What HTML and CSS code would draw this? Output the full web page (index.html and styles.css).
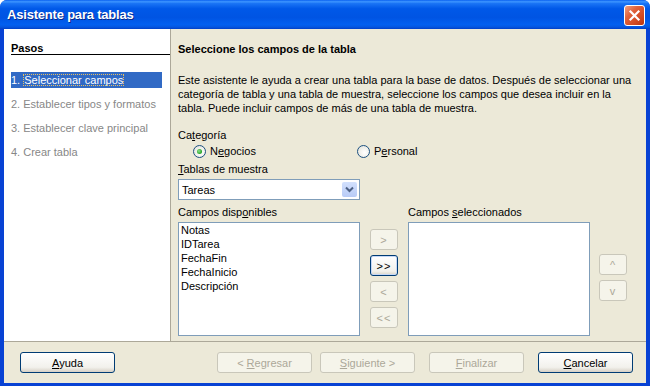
FILE: index.html
```html
<!DOCTYPE html>
<html lang="es">
<head>
    <meta charset="UTF-8">
    <title>Asistente para tablas</title>
    <link rel="stylesheet" href="styles.css">
</head>
<body>
    <div class="window">
        <div class="title-bar">
            <span class="title-text">Asistente para tablas</span>
            <button class="close-button">
                <svg width="13" height="13" viewBox="0 0 13 13">
                    <path d="M2.5 2.5 L10.5 10.5 M10.5 2.5 L2.5 10.5" stroke="#fff" stroke-width="2.2" stroke-linecap="square"/>
                </svg>
            </button>
        </div>

        <div class="client">
            <div class="wizard">
                <div class="steps">
                    <div class="steps-title">Pasos</div>
                    <ul class="step-list">
                        <li class="step active">1. <span class="focus">Seleccionar campos</span></li>
                        <li class="step">2. Establecer tipos y formatos</li>
                        <li class="step">3. Establecer clave principal</li>
                        <li class="step">4. Crear tabla</li>
                    </ul>
                </div>

                <div class="page">
                    <div class="page-title">Seleccione los campos de la tabla</div>
                    <p class="intro">Este asistente le ayuda a crear una tabla para la base de datos. Después de seleccionar una<br>categoría de tabla y una tabla de muestra, seleccione los campos que desea incluir en la<br>tabla. Puede incluir campos de más de una tabla de muestra.</p>

                    <div class="field-label">Ca<u>t</u>egoría</div>
                    <div class="radio-row">
                        <label class="radio checked"><span class="radio-circle"></span><span>N<u>e</u>gocios</span></label>
                        <label class="radio"><span class="radio-circle"></span><span>P<u>e</u>rsonal</span></label>
                    </div>

                    <div class="field-label label-tables"><u>T</u>ablas de muestra</div>
                    <div class="combo">
                        <span class="combo-value">Tareas</span>
                        <span class="combo-arrow">
                            <svg width="9" height="7" viewBox="0 0 9 7">
                                <path d="M1 1.5 L4.5 5 L8 1.5" fill="none" stroke="#4d6185" stroke-width="2"/>
                            </svg>
                        </span>
                    </div>

                    <div class="fields">
                        <div class="field-label">Campos disp<u>o</u>nibles</div>
                        <div></div>
                        <div class="field-label">Campos <u>s</u>eleccionados</div>
                        <div></div>

                        <ul class="listbox">
                            <li>Notas</li>
                            <li>IDTarea</li>
                            <li>FechaFin</li>
                            <li>FechaInicio</li>
                            <li>Descripción</li>
                        </ul>
                        <div class="move-buttons">
                            <button class="small-button" disabled>&gt;</button>
                            <button class="small-button focused">&gt;&gt;</button>
                            <button class="small-button" disabled>&lt;</button>
                            <button class="small-button" disabled>&lt;&lt;</button>
                        </div>
                        <ul class="listbox"></ul>
                        <div class="order-buttons">
                            <button class="small-button" disabled>^</button>
                            <button class="small-button" disabled>v</button>
                        </div>
                    </div>
                </div>
            </div>

            <div class="footer">
                <button class="push-button"><u>A</u>yuda</button>
                <button class="push-button back" disabled>&lt; <u>R</u>egresar</button>
                <button class="push-button" disabled><u>S</u>iguiente &gt;</button>
                <button class="push-button gap" disabled><u>F</u>inalizar</button>
                <button class="push-button gap"><u>C</u>ancelar</button>
            </div>
        </div>
    </div>
</body>
</html>
```

FILE: styles.css
```css
* {
    margin: 0;
    padding: 0;
    box-sizing: border-box;
}

body {
    width: 650px;
    height: 386px;
    overflow: hidden;
    font-family: "Liberation Sans", Arial, sans-serif;
    font-size: 11px;
    color: #000;
}

u {
    text-decoration: underline;
    text-underline-offset: 1px;
}

.window {
    width: 650px;
    height: 386px;
    display: flex;
    flex-direction: column;
    background-color: #0842d4;
    border-radius: 7px 7px 0 0;
    overflow: hidden;
}

/* title bar */
.title-bar {
    height: 29px;
    flex-shrink: 0;
    display: flex;
    align-items: center;
    justify-content: space-between;
    padding: 0 5px 0 7px;
    background: linear-gradient(to bottom,
        #0a61f0 0%, #3d95ff 6%, #1a74f5 12%, #0058e8 30%,
        #0054e3 60%, #0260f0 85%, #0557e0 93%, #0040c8 100%);
}

.title-text {
    color: #fff;
    font-weight: bold;
    font-size: 13px;
    letter-spacing: -0.2px;
    text-shadow: 1px 1px 0 #0a2a8c;
}

.close-button {
    width: 21px;
    height: 21px;
    border: 1px solid #fff;
    border-radius: 3px;
    background: linear-gradient(135deg, #f0a080 0%, #e0623c 35%, #d24a22 70%, #b83510 100%);
    display: flex;
    align-items: center;
    justify-content: center;
    margin-top: 1px;
}

/* window body */
.client {
    flex: 1;
    display: flex;
    flex-direction: column;
    margin: 0 4px 3px 4px;
    background-color: #ece9d8;
}

.wizard {
    height: 312px;
    display: flex;
}

.steps {
    width: 167px;
    background-color: #fff;
    border-right: 1px solid #aca899;
    padding-left: 7px;
    padding-top: 13px;
}

.steps-title {
    font-weight: bold;
    line-height: 12px;
    height: 13px;
    border-bottom: 1px solid #000;
}

.step-list {
    list-style: none;
    margin-top: 17px;
    padding-right: 8px;
}

.step {
    line-height: 16px;
    height: 16px;
    margin-bottom: 8px;
    color: #878787;
    white-space: nowrap;
}

.step.active {
    background-color: #316ac5;
    color: #fff;
}

.step .focus {
    outline: 1px dotted #e8c060;
    outline-offset: -1px;
    padding: 0 1px;
}

/* page content */
.page {
    flex: 1;
    padding: 13px 0 0 7px;
}

.page-title {
    font-weight: bold;
    line-height: 14px;
}

.intro {
    margin-top: 17px;
    line-height: 14px;
    white-space: nowrap;
}

.field-label {
    line-height: 14px;
}

.intro + .field-label {
    margin-top: 13px;
}

.radio-row {
    display: flex;
    margin-top: 1px;
    height: 16px;
    align-items: center;
}

.radio {
    display: flex;
    align-items: center;
    gap: 4px;
}

.radio:first-child {
    margin-left: 15px;
    width: 164px;
}

.radio-circle {
    width: 13px;
    height: 13px;
    border-radius: 50%;
    border: 1px solid #1c5180;
    background: radial-gradient(circle at 60% 60%, #fff 0%, #f4f4f0 40%, #dcdcd4 100%);
    display: flex;
    align-items: center;
    justify-content: center;
}

.radio.checked .radio-circle::after {
    content: "";
    width: 5px;
    height: 5px;
    border-radius: 50%;
    background: radial-gradient(circle at 40% 40%, #8ee28e 0%, #21a121 70%);
}

.label-tables {
    margin-top: 3px;
}

.combo {
    width: 182px;
    height: 21px;
    margin-top: 3px;
    border: 1px solid #7f9db9;
    background-color: #fff;
    display: flex;
    align-items: center;
    justify-content: space-between;
    padding: 1px 1px 1px 3px;
}

.combo-arrow {
    width: 15px;
    height: 15px;
    margin-right: 1px;
    border-radius: 2px;
    background: linear-gradient(to bottom, #d2e0fd, #b8cbf6);
    display: flex;
    align-items: center;
    justify-content: center;
}

.fields {
    margin-top: 5px;
    display: grid;
    grid-template-columns: 182px 28px 182px 29px;
    grid-template-rows: 17px 114px;
    column-gap: 10px;
}

.listbox {
    list-style: none;
    border: 1px solid #7f9db9;
    background-color: #fff;
    padding: 0 2px;
}

.listbox li {
    line-height: 14px;
}

.move-buttons,
.order-buttons {
    display: flex;
    flex-direction: column;
    gap: 5px;
}

.move-buttons {
    padding-top: 7px;
}

.order-buttons {
    padding-top: 32px;
    margin-left: -1px;
}

.small-button {
    width: 28px;
    height: 21px;
    font-family: inherit;
    font-size: 11px;
    border-radius: 3px;
    border: 1px solid #c9c7ba;
    background-color: #f5f4ea;
    color: #aca899;
    letter-spacing: 1px;
}

.small-button.focused {
    border-color: #003c74;
    color: #000;
    background: linear-gradient(to bottom, #fff 0%, #f2f1ec 80%, #d8d4c8 100%);
    box-shadow: inset 0 0 0 1px #c6d8f6;
}

/* footer buttons */
.footer {
    flex: 1;
    border-top: 1px solid #aca899;
    display: flex;
    align-items: flex-start;
    padding: 10px 12px 0 16px;
}

.push-button {
    width: 95px;
    height: 21px;
    font-family: inherit;
    font-size: 11px;
    border-radius: 3px;
    border: 1px solid #003c74;
    background: linear-gradient(to bottom, #fff 0%, #f2f1ec 75%, #d6d0c5 100%);
    color: #000;
}

.push-button:disabled {
    border-color: #c9c7ba;
    background: #f5f4ea;
    color: #aca899;
}

.back {
    margin-left: 102px;
    margin-right: 8px;
}

.gap {
    margin-left: 14px;
}
```
